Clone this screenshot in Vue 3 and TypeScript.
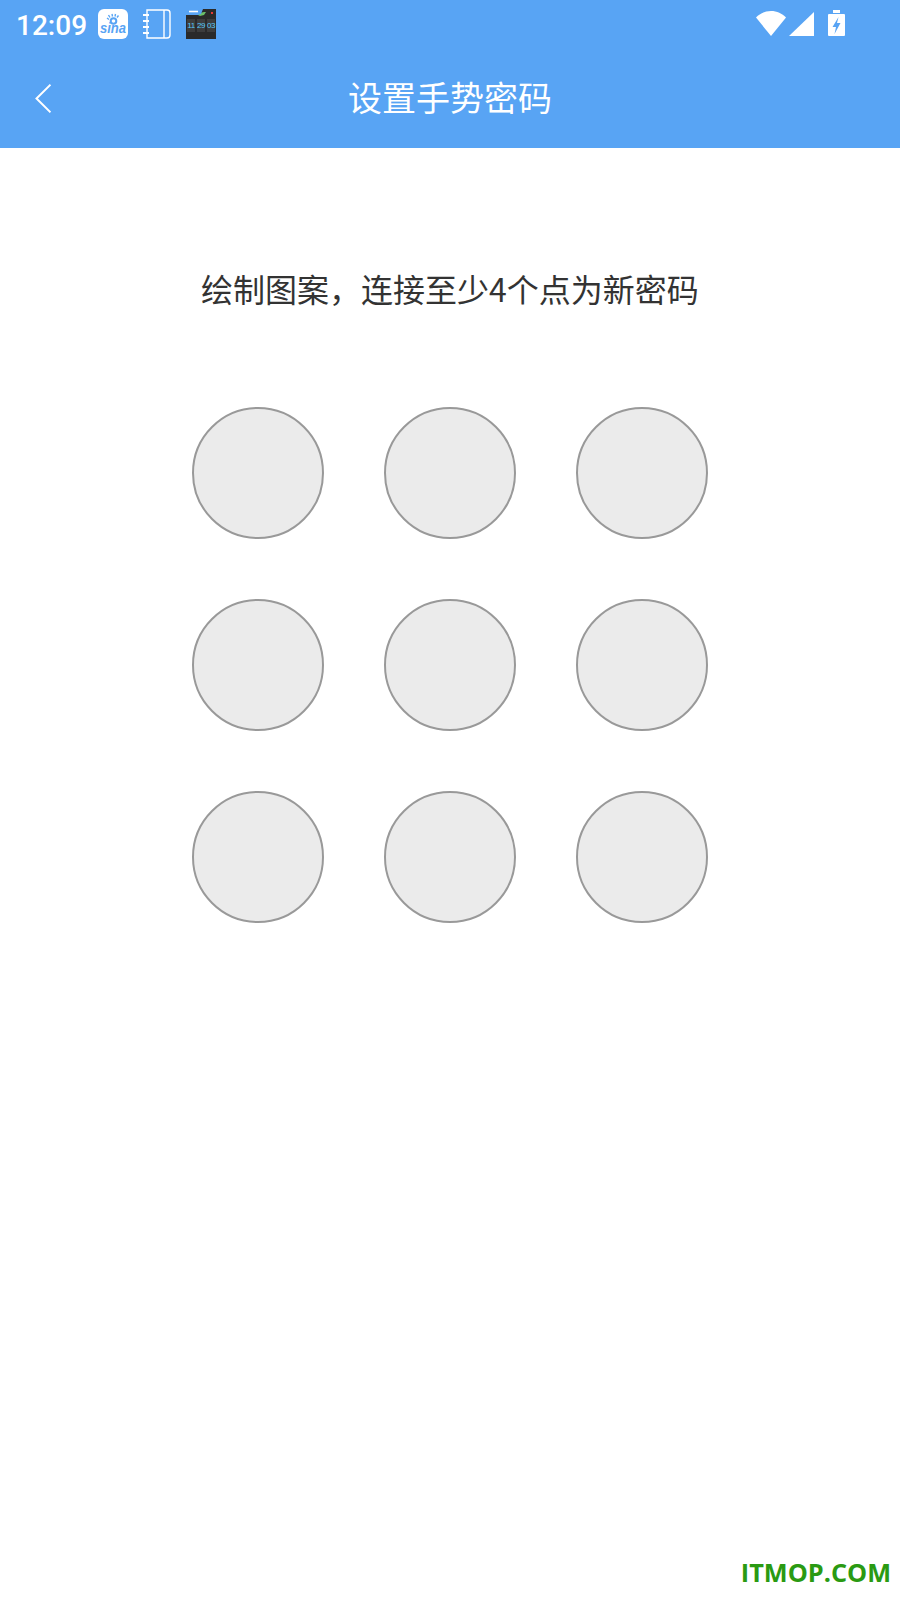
<script setup lang="ts">
const dots = Array.from({ length: 9 }, (_, i) => i)
const digits = ['11', '29', '03']
</script>

<template>
  <div class="page">
    <header class="top">
      <div class="status">
        <span class="time">12:09</span>
        <svg class="sina" width="30" height="30" viewBox="0 0 30 30">
          <rect width="30" height="30" rx="6" fill="#fff" />
          <g fill="none" stroke="#58a4f4">
            <circle cx="15.5" cy="12" r="2.8" stroke-width="2" />
            <path d="M11 10.5l-2-1.5M12 8.5l-1.5-2.5M14.5 7.5l-.5-2.5M17 7.5l.5-2.5M19 8.5l1.5-2" stroke-width="1.4" />
          </g>
          <text x="15" y="24" text-anchor="middle" class="sina-text" textLength="26" lengthAdjust="spacingAndGlyphs">sina</text>
        </svg>
        <svg class="note" width="28" height="30" viewBox="0 0 28 30" fill="none" stroke="#fff" stroke-width="1.4">
          <path d="M4 1h20a3 3 0 0 1 3 3v22a3 3 0 0 1-3 3H4z" />
          <path d="M21 1v28" />
          <path d="M0 6h6M0 12h6M0 18h6M0 24h6" stroke-width="2" />
        </svg>
        <div class="clock">
          <svg class="clock-top" width="30" height="9" viewBox="0 0 30 9">
            <path d="M10 5l4 2 4-1 2-3-2 0z" fill="#6abf69" />
            <path d="M0 0h17l-2 5-3 1H0z" fill="#58a4f4" />
            <path d="M3 2.5h9" stroke="#fff" stroke-width="1.6" />
            <rect x="25" y="3" width="2" height="2" fill="#e53935" />
          </svg>
          <div class="clock-digits">
            <span v-for="d in digits" :key="d">{{ d }}</span>
          </div>
        </div>
        <div class="sys">
          <svg class="wifi" width="30" height="25" viewBox="0 0 30 25"><path d="M0 6.5C4 2.5 9 0 15 0s11 2.5 15 6.5L15 25z" fill="#fff" /></svg>
          <svg class="signal" width="25" height="24" viewBox="0 0 25 24"><path d="M25 0v24H0z" fill="#fff" /></svg>
          <svg class="battery" width="17" height="26" viewBox="0 0 17 26">
            <path d="M5 0h7v3H5z" fill="#fff" />
            <path d="M1 4h15a1 1 0 0 1 1 1v20a1 1 0 0 1-1 1H1a1 1 0 0 1-1-1V5a1 1 0 0 1 1-1z" fill="#fff" />
            <path d="M10.5 7l-6 10h3.5l-1.500 7 6-11H9z" fill="#58a4f4" />
          </svg>
        </div>
      </div>
      <div class="nav">
        <svg class="back" width="16" height="29" viewBox="0 0 16 29" fill="none" stroke="#fff" stroke-width="2">
          <path d="M15.5 .7L1.500 14.500l14 13.800" />
        </svg>
        <h1 class="title">设置手势密码</h1>
      </div>
    </header>

    <p class="hint">绘制图案，连接至少4个点为新密码</p>

    <div class="grid">
      <span v-for="d in dots" :key="d" class="dot"></span>
    </div>

    <span class="mark">ITMOP.COM</span>
  </div>
</template>

<style scoped>
.page {
  position: relative;
  width: 900px;
  height: 1600px;
  background: #fff;
  overflow: hidden;
  font-family: "Noto Sans CJK SC", Roboto, sans-serif;
}
.top {
  height: 148px;
  background: #58a4f4;
  color: #fff;
}
.status {
  height: 50px;
  display: flex;
  align-items: center;
  padding-left: 16px;
}
.time {
  font-family: Roboto, sans-serif;
  font-weight: 500;
  font-size: 28px;
  width: 82px;
}
.sina {
  margin-top: -2px;
}
.sina-text {
  fill: #58a4f4;
  font-family: "Liberation Sans", sans-serif;
  font-weight: 700;
  font-style: italic;
  font-size: 14px;
}
.note {
  margin-left: 15px;
  margin-top: -2px;
}
.clock {
  position: relative;
  width: 30px;
  height: 30px;
  margin-left: 15px;
  margin-top: -2px;
  background: #2a2a2a;
}
.clock-top {
  position: absolute;
  left: 0;
  top: 0;
}
.clock-digits {
  position: absolute;
  left: 1px;
  right: 1px;
  top: 10px;
  display: flex;
  justify-content: space-between;
  color: #55c8f8;
  font-family: "Liberation Sans", sans-serif;
  font-size: 8px;
  line-height: 13px;
}
.clock-digits span {
  width: 8px;
  background: #3d3d3d;
  text-align: center;
  letter-spacing: -.5px;
}
.sys {
  position: absolute;
  left: 756px;
  top: 10px;
  display: flex;
  align-items: flex-start;
  gap: 3px;
}
.wifi {
  margin-top: 1px;
}
.signal {
  margin-top: 2px;
}
.battery {
  margin-left: 11px;
}
.nav {
  position: relative;
  height: 98px;
  padding-bottom: 5px;
  box-sizing: border-box;
  display: flex;
  align-items: center;
  justify-content: center;
}
.back {
  position: absolute;
  left: 35px;
  top: 34px;
}
.title {
  margin: 0;
  font-size: 34px;
  font-weight: 400;
}
.hint {
  margin: 0;
  padding-top: 117px;
  text-align: center;
  font-size: 32px;
  line-height: 46px;
  color: #333;
}
.grid {
  display: grid;
  grid-template-columns: repeat(3, 132px);
  gap: 60px;
  justify-content: center;
  margin-top: 96px;
}
.dot {
  box-sizing: border-box;
  width: 132px;
  height: 132px;
  border: 2px solid #999;
  border-radius: 50%;
  background: #ebebeb;
}
.mark {
  position: absolute;
  right: 9px;
  bottom: 11px;
  color: #2a9a12;
  font-family: "Open Sans", sans-serif;
  font-weight: 700;
  font-size: 25.300px;
  line-height: 34px;
}
</style>
